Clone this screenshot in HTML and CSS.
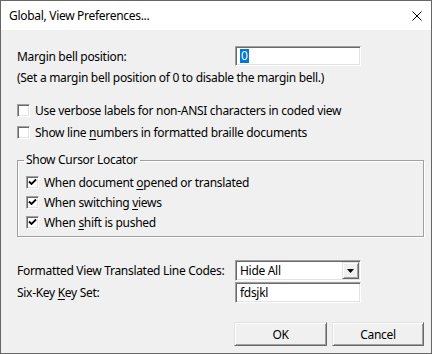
FILE: index.html
```html
<!DOCTYPE html>
<html lang="en">
<head>
  <meta charset="UTF-8">
  <title>Global, View Preferences...</title>
  <link rel="stylesheet" href="styles.css">
</head>
<body>

<div class="window">
  <div class="titlebar">
    <span class="title">Global, View Preferences...</span>
    <svg class="close" width="10" height="10" viewBox="0 0 10 10"><path d="M0.5 0.5 L9.5 9.5 M9.5 0.5 L0.5 9.5" stroke="#000" stroke-width="1" fill="none"/></svg>
  </div>

  <div class="content">
    <div class="row">
      <span class="label">Margin bell position:</span>
      <div class="edit"><span class="selected">0</span></div>
    </div>
    <p class="note">(Set a margin bell position of 0 to disable the margin bell.)</p>

    <div class="option first"><span class="check"></span><span>Use verbose labels for non-ANSI characters in coded view</span></div>
    <div class="option"><span class="check"></span><span>Show line <u>n</u>umbers in formatted braille documents</span></div>

    <!-- cursor locator group -->
    <fieldset class="group">
      <legend>Show Cursor Locator</legend>
      <div class="option"><span class="check"><svg viewBox="0 0 13 13" width="13" height="13"><path d="M3 5.5 L5.5 8 L10 3.5" stroke="#000" stroke-width="1.8" fill="none"/></svg></span><span>When document <u>o</u>pened or translated</span></div>
      <div class="option"><span class="check"><svg viewBox="0 0 13 13" width="13" height="13"><path d="M3 5.5 L5.5 8 L10 3.5" stroke="#000" stroke-width="1.8" fill="none"/></svg></span><span>When switching <u>v</u>iews</span></div>
      <div class="option"><span class="check"><svg viewBox="0 0 13 13" width="13" height="13"><path d="M3 5.5 L5.5 8 L10 3.5" stroke="#000" stroke-width="1.8" fill="none"/></svg></span><span>When <u>s</u>hift is pushed</span></div>
    </fieldset>

    <div class="row codes">
      <span class="label">Formatted View Translated Line Codes:</span>
      <div class="combo">
        <span class="combo-text">Hide All</span>
        <span class="combo-btn"><svg width="7" height="4" viewBox="0 0 7 4"><path d="M0 0 H7 L3.5 4 Z" fill="#000"/></svg></span>
      </div>
    </div>
    <div class="row keyset">
      <span class="label">Six-Key <u>K</u>ey Set:</span>
      <div class="edit">fdsjkl</div>
    </div>

    <div class="buttons">
      <button class="btn ok">OK</button>
      <button class="btn cancel">Cancel</button>
    </div>
  </div>
</div>

</body>
</html>
```

FILE: styles.css
```css
body {
  margin: 0;
  font-family: "Noto Sans", "Open Sans", sans-serif;
  font-size: 12px;
  letter-spacing: -0.3px;
  color: #000;
  background: #fff;
}

.window {
  width: 432px;
  height: 354px;
  box-sizing: border-box;
  border: 1px solid #666;
  background: #f0f0f0;
  display: flex;
  flex-direction: column;
}

.titlebar {
  height: 29px;
  background: #fff;
  display: flex;
  align-items: center;
  justify-content: space-between;
  padding: 0 9px 0 8px;
}

.content {
  flex: 1;
  padding: 16px 7px 0 16px;
}

.row {
  display: flex;
  align-items: center;
  height: 20px;
}

.label {
  width: 218px;
  flex: none;
  white-space: nowrap;
}

.edit {
  width: 126px;
  height: 20px;
  box-sizing: border-box;
  background: #fff;
  border: 1px solid;
  border-color: #a0a0a0 #fff #fff #a0a0a0;
  box-shadow: inset 1px 1px 0 #696969, inset -1px -1px 0 #e3e3e3;
  padding-left: 4px;
  display: flex;
  align-items: center;
}

.selected {
  background: #0078d7;
  color: #fff;
  padding: 0 1px;
  line-height: 14px;
}

.note {
  margin: 4px 0 0;
  line-height: 16px;
}

.option {
  display: flex;
  align-items: center;
  height: 20px;
  margin-top: 2px;
  white-space: nowrap;
}

.option.first {
  margin-top: 14px;
}

u {
  text-underline-offset: 2px;
}

.check {
  width: 13px;
  height: 13px;
  box-sizing: border-box;
  background: #fff;
  border: 1px solid;
  border-color: #a0a0a0 #fff #fff #a0a0a0;
  box-shadow: inset 1px 1px 0 #696969, inset -1px -1px 0 #e3e3e3;
  margin-right: 5px;
  flex: none;
  position: relative;
}

.check svg {
  position: absolute;
  left: -1px;
  top: -1px;
}

.group {
  margin: 10px 0 0;
  padding: 4px 0 4px 8px;
  border: 1px solid #a0a0a0;
  box-shadow: inset 1px 1px 0 #fff, 1px 1px 0 #fff;
}

.group legend {
  padding: 0 2px;
  margin-left: -2px;
  line-height: 16px;
}

.group .option {
  margin-top: 0;
}

.codes {
  margin-top: 23px;
  height: 21px;
}

.keyset {
  margin-top: 1px;
  height: 21px;
}

.keyset .edit {
  height: 21px;
}

.combo {
  width: 126px;
  height: 21px;
  box-sizing: border-box;
  background: #fff;
  border: 1px solid;
  border-color: #a0a0a0 #fff #fff #a0a0a0;
  box-shadow: inset 1px 1px 0 #696969, inset -1px -1px 0 #e3e3e3;
  display: flex;
  align-items: center;
  padding: 1px 1px 1px 4px;
}

.combo-text {
  flex: 1;
}

.combo-btn {
  width: 17px;
  height: 17px;
  box-sizing: border-box;
  background: #f0f0f0;
  border: 1px solid;
  border-color: #e3e3e3 #696969 #696969 #e3e3e3;
  box-shadow: inset 1px 1px 0 #fff, inset -1px -1px 0 #a0a0a0;
  display: flex;
  align-items: center;
  justify-content: center;
}

.buttons {
  display: flex;
  justify-content: flex-end;
  gap: 5px;
  margin-top: 19px;
}

.btn {
  height: 24px;
  width: 92px;
  font: inherit;
  letter-spacing: inherit;
  color: #000;
  background: #f0f0f0;
  border: 1px solid;
  border-color: #e3e3e3 #696969 #696969 #e3e3e3;
  box-shadow: inset 1px 1px 0 #fff, inset -1px -1px 0 #a0a0a0;
  padding: 0;
}

.btn.ok {
  width: 93px;
}
```
